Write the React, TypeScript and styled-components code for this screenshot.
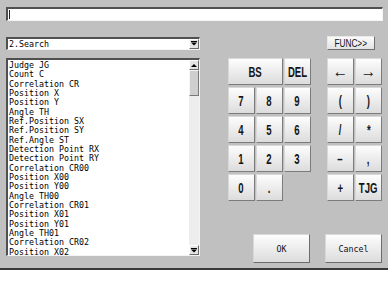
import React from "react";
import styled, { createGlobalStyle } from "styled-components";

const Global = createGlobalStyle`
  html, body { margin: 0; padding: 0; background: #ffffff; }
  body { font-family: "DejaVu Sans Mono", "Liberation Mono", monospace; }
`;

const Panel = styled.div`
  box-sizing: border-box;
  width: 388px;
  height: 270px;
  background: #c0c0c0;
  border-bottom: 2px solid #3a3a3a;
  padding: 7px 5px 0 6px;
  display: flex;
  flex-direction: column;
`;

const Inset = styled.div`
  box-sizing: border-box;
  background: #ffffff;
  border-style: solid;
  border-width: 2px 1px 1px 2px;
  border-color: #505050 #f4f4f4 #f4f4f4 #505050;
`;

const TextInput = styled(Inset)`
  height: 14px;
  width: 377px;
  position: relative;
`;

const Caret = styled.div`
  position: absolute;
  left: 1px;
  top: 1px;
  width: 1px;
  height: 9px;
  background: #222;
`;

const Row = styled.div`
  display: flex;
  align-items: center;
  justify-content: space-between;
  margin-top: 15px;
`;

const Combo = styled(Inset)`
  width: 194px;
  height: 13px;
  display: flex;
  align-items: center;
  justify-content: space-between;
  font-size: 8.3px;
  color: #000;
  padding-left: 1px;
`;

const SmallArrowBtn = styled.div`
  box-sizing: border-box;
  width: 10px;
  height: 10px;
  background: #e4e4e4;
  border: 1px solid;
  border-color: #ffffff #6a6a6a #6a6a6a #ffffff;
  display: flex;
  align-items: center;
  justify-content: center;
`;

const Label = styled.span<{ $size?: number; $weight?: string; $scale?: number }>`
  display: inline-block;
  font-family: "Liberation Sans", "Arial", sans-serif;
  font-size: ${(p) => p.$size ?? 14.5}px;
  font-weight: ${(p) => p.$weight ?? "bold"};
  transform: scaleX(${(p) => p.$scale ?? 0.66});
  white-space: nowrap;
`;

const FuncBtn = styled.div`
  box-sizing: border-box;
  width: 48px;
  height: 14px;
  margin-right: 8px;
  background: linear-gradient(#fbfbfb, #e2e2e2);
  border: 1px solid;
  border-color: #e8e8e8 #6e6e6e #6e6e6e #e8e8e8;
  display: flex;
  align-items: center;
  justify-content: center;
  color: #111;
`;

const Main = styled.div`
  display: flex;
  margin-top: 8px;
`;

const ListBox = styled(Inset)`
  width: 194px;
  height: 198px;
  display: flex;
  overflow: hidden;
`;

const Items = styled.div`
  flex: 1;
  padding: 1px 0 0 1px;
  font-size: 8.3px;
  line-height: 9.33px;
  color: #000;
  white-space: pre;
`;

const ScrollBar = styled.div`
  width: 10px;
  background: #ededed;
  display: flex;
  flex-direction: column;
`;

const Thumb = styled.div`
  box-sizing: border-box;
  height: 26px;
  background: #cfcfcf;
  border: 1px solid;
  border-color: #f6f6f6 #7a7a7a #7a7a7a #f6f6f6;
`;

const Spacer = styled.div`
  flex: 1;
`;

const Right = styled.div`
  margin-left: 28px;
  display: flex;
  flex-direction: column;
`;

const Keys = styled.div`
  display: flex;
  gap: 16px;
`;

const Grid = styled.div<{ $cols: number }>`
  display: grid;
  grid-template-columns: repeat(${(p) => p.$cols}, 27px);
  grid-auto-rows: 27px;
  column-gap: 1px;
  row-gap: 2px;
  align-content: start;
`;

const Key = styled.div<{ $span?: number }>`
  box-sizing: border-box;
  grid-column: span ${(p) => p.$span ?? 1};
  background: linear-gradient(#fdfdfd, #e6e6e6 70%, #dcdcdc);
  border: 1px solid;
  border-color: #d8d8d8 #7c7c7c #7c7c7c #d8d8d8;
  display: flex;
  align-items: center;
  justify-content: center;
  color: #151515;
`;

const Bottom = styled.div`
  display: flex;
  justify-content: flex-end;
  gap: 15px;
  margin-top: 33px;
`;

const BigBtn = styled.div`
  box-sizing: border-box;
  width: 57px;
  height: 29px;
  background: linear-gradient(#fdfdfd, #e6e6e6 70%, #dcdcdc);
  border: 1px solid;
  border-color: #d8d8d8 #6c6c6c #6c6c6c #d8d8d8;
  display: flex;
  align-items: center;
  justify-content: center;
  font-size: 8.3px;
  color: #111;
`;

const Tri = ({ up }: { up?: boolean }) => (
  <svg width="6" height="5" viewBox="0 0 6 5">
    {up ? (
      <polygon points="0,4 6,4 3,1" fill="#000" />
    ) : (
      <>
        <rect x="0" y="0" width="6" height="1" fill="#000" />
        <polygon points="0,1.5 6,1.5 3,4.5" fill="#000" />
      </>
    )}
  </svg>
);

const items = [
  "Judge JG",
  "Count C",
  "Correlation CR",
  "Position X",
  "Position Y",
  "Angle TH",
  "Ref.Position SX",
  "Ref.Position SY",
  "Ref.Angle ST",
  "Detection Point RX",
  "Detection Point RY",
  "Correlation CR00",
  "Position X00",
  "Position Y00",
  "Angle TH00",
  "Correlation CR01",
  "Position X01",
  "Position Y01",
  "Angle TH01",
  "Correlation CR02",
  "Position X02",
];

const K = ({ children, span }: { children: React.ReactNode; span?: number }) => (
  <Key $span={span}>
    <Label>{children}</Label>
  </Key>
);

const ArrowKey = ({ children }: { children: React.ReactNode }) => (
  <Key>
    <Label $size={17} $weight="normal" $scale={0.9}>
      {children}
    </Label>
  </Key>
);

export default function App() {
  return (
    <>
      <Global />
      <Panel>
        <TextInput>
          <Caret />
        </TextInput>
        <Row>
          <Combo>
            <span>2.Search</span>
            <SmallArrowBtn>
              <Tri />
            </SmallArrowBtn>
          </Combo>
          <FuncBtn>
            <Label $size={11} $weight="normal" $scale={0.75}>
              FUNC&gt;&gt;
            </Label>
          </FuncBtn>
        </Row>
        <Main>
          <ListBox>
            <Items>{items.join("\n")}</Items>
            <ScrollBar>
              <SmallArrowBtn>
                <Tri up />
              </SmallArrowBtn>
              <Thumb />
              <Spacer />
              <SmallArrowBtn>
                <Tri />
              </SmallArrowBtn>
            </ScrollBar>
          </ListBox>
          <Right>
            <Keys>
              <Grid $cols={3}>
                <K span={2}>BS</K>
                <K>DEL</K>
                <K>7</K>
                <K>8</K>
                <K>9</K>
                <K>4</K>
                <K>5</K>
                <K>6</K>
                <K>1</K>
                <K>2</K>
                <K>3</K>
                <K>0</K>
                <K>.</K>
              </Grid>
              <Grid $cols={2}>
                <ArrowKey>←</ArrowKey>
                <ArrowKey>→</ArrowKey>
                <K>(</K>
                <K>)</K>
                <K>/</K>
                <K>*</K>
                <K>–</K>
                <K>,</K>
                <K>+</K>
                <K>TJG</K>
              </Grid>
            </Keys>
            <Bottom>
              <BigBtn>OK</BigBtn>
              <BigBtn>Cancel</BigBtn>
            </Bottom>
          </Right>
        </Main>
      </Panel>
    </>
  );
}
